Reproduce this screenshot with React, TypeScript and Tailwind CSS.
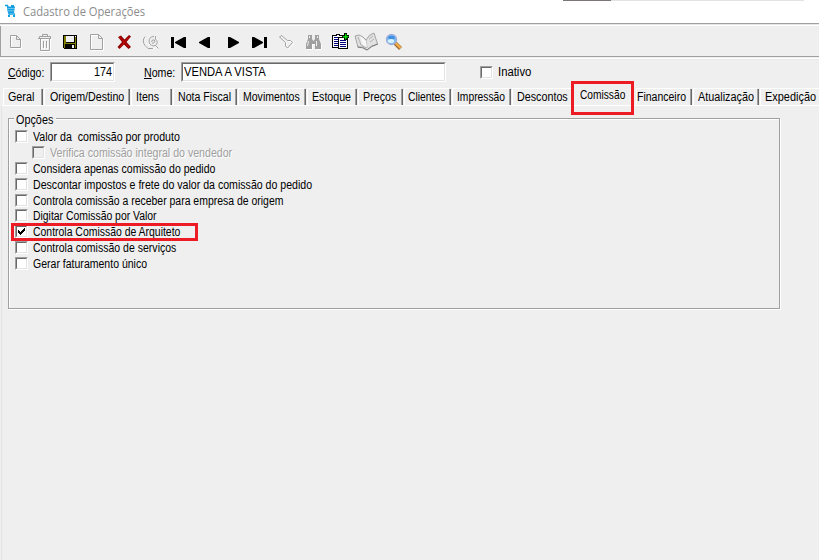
import { useLayoutEffect, useRef, useState } from 'react';
import type { ReactNode } from 'react';

/* Bitmap-like narrow label: scales its glyphs horizontally to the given width. */
function Label({ w, children, className = '' }: { w: number; children: ReactNode; className?: string }) {
  const ref = useRef<HTMLSpanElement>(null);
  const [scale, setScale] = useState(1);
  useLayoutEffect(() => {
    if (ref.current) setScale(w / ref.current.offsetWidth);
  }, [w]);
  return (
    <span className={`block shrink-0 whitespace-pre ${className}`} style={{ width: w }}>
      <span ref={ref} className="inline-block origin-left" style={{ transform: `scaleX(${scale})` }}>
        {children}
      </span>
    </span>
  );
}

function Tool({ x, w, children }: { x: number; w: number; children: ReactNode }) {
  return (
    <svg className="shrink-0" width={w} height={26} viewBox={`${x} 29 ${w} 26`} fill="none">
      {children}
    </svg>
  );
}

function Toolbar() {
  return (
    <div className="flex h-[30px] items-start border-l border-[#a0a0a0] bg-[#efefef] pt-[3px]">
      <Tool x={1} w={29}>
        <path d="M11.500 36.500V48.500H21.500V40.500L17.500 36.500Z" stroke="#fff" />
        <path d="M10.500 35.500H16.500L20.500 39.500V47.500H10.500ZM16.500 35.500V39.500H20.500" stroke="#a0a0a0" />
      </Tool>
      <Tool x={30} w={27}>
        <path d="M39 39.500H52M41.500 40V51.500H50.500V40M44.500 42V49M47.500 42V49" stroke="#fff" />
        <path d="M38 38.500H51M40.500 39V50.500H49.500V39M43.500 41V48M46.500 41V48M39.500 38V36.500H50.500V38M42.500 36V34.500H47.500V36" stroke="#a0a0a0" />
      </Tool>
      <Tool x={57} w={27}>
        <g shapeRendering="crispEdges">
          <path d="M63 35H77V49H64L63 48Z" fill="#000" />
          <path d="M64 36H66V43H75V36H76V48H64Z" fill="#808000" />
          <path d="M66 36H74V42H66Z" fill="#efefef" />
          <path d="M65 44H75V49H65Z" fill="#000" />
          <path d="M72 45H74V48H72Z" fill="#efefef" />
          <path d="M75 36H76V37H75Z" fill="#fff" />
        </g>
      </Tool>
      <Tool x={84} w={26}>
        <path d="M91.500 35.500V50.500H103.500V39.500L98.500 35.500Z" stroke="#fff" />
        <path d="M90.500 34.500H98.500L102.500 38.500V49.500H90.500ZM98.500 34.500V38.500H102.500" stroke="#a0a0a0" />
      </Tool>
      <Tool x={110} w={27}>
        <path d="M118 37L121 35.500L124.500 39.500L129 35L131 36.500L126.500 42L131 47L128.500 49L124 44.500L119.500 49L117.500 47L122 42Z" fill="#900000" />
        <path d="M119.500 37L129 47M129 37L120 47" stroke="#d00b0b" strokeWidth="1" />
      </Tool>
      <Tool x={137} w={28}>
        <path d="M145 36Q141 42 146 47L148 48.500H155M150 39Q154 34 157 39Q159 44 153 46Q148 46 149 41M155 46L159 49" stroke="#fff" />
        <path d="M145 36.500Q141.500 41 145 45.500L148 48.500H153M149 42Q149 36.500 154 36.500M155.500 36V39Q159 42 155.500 45.500Q150.500 47 149 42M151.500 42Q152 39 154.500 40Q155.500 43.500 152 43M155 45L158.500 48.500" stroke="#a0a0a0" />
      </Tool>
      <Tool x={165} w={27}>
        <path d="M171 37H174V48H171ZM186 37V48H184L175 43V42L184 37Z" fill="#000" />
      </Tool>
      <Tool x={192} w={27}>
        <path d="M210 37V48H208L199 43V42L208 37Z" fill="#000" />
      </Tool>
      <Tool x={219} w={27}>
        <path d="M228 37V48H230L239 43V42L230 37Z" fill="#000" />
      </Tool>
      <Tool x={246} w={26}>
        <path d="M252 37V48H254L263 43V42L254 37ZM264 37H267V48H264Z" fill="#000" />
      </Tool>
      <Tool x={272} w={28}>
        <path d="M281 37.500L286.500 43V46.500L288.500 49L293.500 43.500L291 41.500H288L283 36.500" stroke="#fff" />
        <path d="M279.500 37L281.500 35.500L287.500 40.500H290.500L292.500 42.500L287.500 48L285.500 46V42.500Z" stroke="#a0a0a0" />
      </Tool>
      <Tool x={300} w={26}>
        <path d="M309 36H312V39L314 41L316 39V36H319V39L322 45V50H316V45H313V50H307V45L309 40Z" fill="#fff" />
        <path d="M308 35H312V39L313.500 41L315 39V35H319V39L321 44V49H315V44H312V49H306V44L308 39Z" fill="#a0a0a0" />
        <path d="M309.500 36V38M317.500 36V38M308.500 41L307.500 46M316.500 41V46" stroke="#efefef" />
      </Tool>
      <Tool x={326} w={26}>
        <g shapeRendering="crispEdges">
          <path d="M332.500 35.500H336.500V34.500H339.500V35.500H343.500V47.500H332.500Z" fill="#fff" stroke="#000" />
          <path d="M334 37.500H342M334 39.500H342M334 41.500H342M334 43.500H342M334 45.500H340" stroke="#000080" />
          <path d="M338.500 37.500H347.500V48.500H338.500Z" fill="#fff" stroke="#000" />
          <path d="M340 40.500H346M340 42.500H346M340 44.500H346M340 46.500H346" stroke="#000080" />
          <path d="M344 33H347V35H349V38H347V40H344V38H342V35H344Z" fill="#000" />
          <path d="M345 34H346V36H348V37H346V39H345V37H343V36H345Z" fill="#00e000" stroke="#00d000" strokeWidth=".5" />
        </g>
      </Tool>
      <Tool x={352} w={28}>
        <path d="M355 36L359 35Q363 36 366 40Q369 34 374 33L377.500 44Q371 45 367 50Q363 46 358 47Z" fill="#e2e2e2" stroke="#a3a3a3" />
        <path d="M358 37L361 45L366 48M366 40L367 48M369 39L373 36M370 42L374 39" stroke="#b0b0b0" />
        <path d="M360 36L366 41L367 47L362 44Z" fill="#f7f7f7" />
        <path d="M357.500 47Q363 47 367 50Q371 46 378 44" stroke="#7d7d7d" />
      </Tool>
      <Tool x={380} w={28}>
        <path d="M395 43L400.500 48.500" stroke="#9a6a35" strokeWidth="4" />
        <path d="M395.500 43L400.500 48" stroke="#f6ae45" strokeWidth="2.300" />
        <circle cx="391.500" cy="39.500" r="5" fill="#74b6f5" stroke="#9fafdb" strokeWidth="1.400" />
        <ellipse cx="391.500" cy="37.500" rx="3.300" ry="1.800" fill="#3f90e2" />
        <ellipse cx="391" cy="41" rx="3.300" ry="2" fill="#d4f2ff" />
      </Tool>
    </div>
  );
}

function Check({ checked = false, disabled = false }: { checked?: boolean; disabled?: boolean }) {
  return (
    <span
      className={`block size-[13px] shrink-0 border border-t-[#a0a0a0] border-l-[#a0a0a0] border-r-white border-b-white ${disabled ? 'bg-[#efefef]' : 'bg-white'}`}
    >
      <span className="block size-[11px] border border-t-[#696969] border-l-[#696969] border-r-[#e3e3e3] border-b-[#e3e3e3]">
        {checked && (
          <svg className="block" width="9" height="9" viewBox="0 0 9 9" shapeRendering="crispEdges">
            <path d="M1 3h1v1h1v1h1v-1h1v-1h1v-1h1v-1h1v3h-1v1h-1v1h-1v1h-1v1h-1v-1h-1v-1h-1z" fill="#000" />
          </svg>
        )}
      </span>
    </span>
  );
}

function Input({ className, children }: { className: string; children: ReactNode }) {
  return (
    <div className={`h-[20px] shrink-0 border border-t-[#a0a0a0] border-l-[#a0a0a0] border-r-white border-b-white ${className}`}>
      <div className="flex h-full border border-t-[#696969] border-l-[#696969] border-r-[#e3e3e3] border-b-[#e3e3e3] bg-white leading-[16px]">
        {children}
      </div>
    </div>
  );
}

type Tab = { text: string; w: number; pad: string; box: string; active?: boolean };

const tabs: Tab[] = [
  { text: 'Geral', w: 26, pad: 'pl-[4px]', box: 'w-[41px]' },
  { text: 'Origem/Destino', w: 74, pad: 'pl-[5px]', box: 'w-[87px]' },
  { text: 'Itens', w: 23, pad: 'pl-[4px]', box: 'w-[42px]' },
  { text: 'Nota Fiscal', w: 53, pad: 'pl-[4px]', box: 'w-[65px]' },
  { text: 'Movimentos', w: 57, pad: 'pl-[4px]', box: 'w-[69px]' },
  { text: 'Estoque', w: 39, pad: 'pl-[4px]', box: 'w-[51px]' },
  { text: 'Preços', w: 33, pad: 'pl-[4px]', box: 'w-[46px]' },
  { text: 'Clientes', w: 37, pad: 'pl-[3px]', box: 'w-[48px]' },
  { text: 'Impressão', w: 48, pad: 'pl-[4px]', box: 'w-[60px]' },
  { text: 'Descontos', w: 51, pad: 'pl-[4px]', box: 'w-[62px]' },
  { text: 'Comissão', w: 45, pad: 'pl-[6px]', box: 'w-[62px]', active: true },
  { text: 'Financeiro', w: 49, pad: 'pl-0', box: 'w-[57px]' },
  { text: 'Atualização', w: 56, pad: 'pl-[4px]', box: 'w-[67px]' },
  { text: 'Expedição', w: 51, pad: 'pl-[4px]', box: 'w-[60px]' },
];

type Option = { text: string; w: number; checked?: boolean; disabled?: boolean; h?: string };

const options: Option[] = [
  { text: 'Valor da  comissão por produto', w: 147 },
  { text: 'Verifica comissão integral do vendedor', w: 182, disabled: true },
  { text: 'Considera apenas comissão do pedido', w: 182 },
  { text: 'Descontar impostos e frete do valor da comissão do pedido', w: 279 },
  { text: 'Controla comissão a receber para empresa de origem', w: 250, h: 'h-[15px]' },
  { text: 'Digitar Comissão por Valor', w: 124 },
  { text: 'Controla Comissão de Arquiteto', w: 147, checked: true },
  { text: 'Controla comissão de serviços', w: 143 },
  { text: 'Gerar faturamento único', w: 114 },
];

export default function App() {
  return (
    <div className="relative flex h-[560px] w-[819px] flex-col overflow-hidden bg-[#efefef] font-['Liberation_Sans',Arial,sans-serif] text-[12px] leading-[16px] text-black">
      <header className="flex h-[23px] shrink-0 items-start bg-white">
        <svg className="mt-[4px] ml-[4px] shrink-0" width="13" height="14" viewBox="0 0 13 14">
          <path d="M1 1.500H3.500L5 10H11" fill="none" stroke="#159fe0" strokeWidth="1.400" />
          <path d="M3 2.500H11L10 9H4Z" fill="#159fe0" />
          <path d="M3.500 4.500H11M4 6.800H10.500" stroke="#a5def8" strokeWidth=".6" />
          <path d="M7 1H10V3H7ZM4 11H6V13H4ZM9 11H11V13H9Z" fill="#159fe0" />
        </svg>
        <div className="mt-[4px] ml-[6px] font-['Open_Sans','Noto_Sans',sans-serif] text-[12px] text-[#8c8c8c]">
          <Label w={122}>Cadastro de Operações</Label>
        </div>
        <div className="ml-[418px] h-px w-[48px] bg-[#7b7575]" />
        <div className="h-px w-[193px] bg-[#e3e3e3]" />
      </header>
      <div className="h-px shrink-0 bg-[#a0a0a0]" />
      <div className="h-px shrink-0 bg-[#e6e6e6]" />
      <div className="h-px shrink-0 bg-white" />
      <Toolbar />
      <div className="h-px shrink-0 bg-[#a0a0a0]" />
      <div className="h-px shrink-0 bg-[#efefef]" />
      <div className="h-px shrink-0 bg-white" />
      <div className="h-px shrink-0 bg-[#e8e8e8]" />

      <div className="flex h-[28px] shrink-0 items-start pt-[2px] pl-[8px]">
        <div className="mt-[3px] w-[42px]">
          <Label w={36}><u>C</u>ódigo:</Label>
        </div>
        <Input className="w-[65px] pl-0">
          <Label w={18} className="ml-[42px]">174</Label>
        </Input>
        <div className="mt-[3px] ml-[29px] w-[36px]">
          <Label w={31}><u>N</u>ome:</Label>
        </div>
        <Input className="ml-px w-[265px]">
          <Label w={82} className="ml-px">VENDA A VISTA</Label>
        </Input>
        <div className="mt-[4px] ml-[34px]">
          <Check />
        </div>
        <div className="mt-[2px] ml-[5px]">
          <Label w={33}>Inativo</Label>
        </div>
      </div>

      <nav className="flex h-[17px] shrink-0 items-start pl-[3px]">
        {tabs.map((t) =>
          t.active ? (
            <div key={t.text} className={`-mt-px h-[18px] shrink-0 ${t.box} ${t.pad}`}>
              <Label w={t.w}>{t.text}</Label>
            </div>
          ) : (
            <div key={t.text} className={`flex h-[17px] shrink-0 ${t.box}`}>
              <div className={`min-w-0 flex-1 border-t border-l border-white ${t.pad}`}>
                <Label w={t.w}>{t.text}</Label>
              </div>
              {t.text !== 'Descontos' && t.text !== 'Expedição' && (
                <div className="mt-px mr-px w-[2px] border-r border-[#696969] bg-[#a0a0a0]" />
              )}
            </div>
          ),
        )}
      </nav>

      <main className="ml-px flex-1 border-t border-l border-t-white border-l-[#e3e3e3] pt-[7px] pl-[6px]">
        <fieldset className="mt-[5px] h-[191px] w-[772px] border border-[#a0a0a0] shadow-[1px_1px_0_#fff,inset_1px_1px_0_#fff]">
          <div className="-mt-[7px] ml-[5px] w-[42px] bg-[#efefef] pl-[2px]">
            <Label w={37}>Opções</Label>
          </div>
          <div className="pl-[6px]">
            {options.map((o) => (
              <div key={o.text} className={`flex shrink-0 items-start gap-[5px] ${o.h ?? 'h-[16px]'} ${o.disabled ? 'pl-[17px]' : ''}`}>
                <div className="pt-[2px]">
                  <Check checked={o.checked} disabled={o.disabled} />
                </div>
                <Label w={o.w} className={`pt-px ${o.disabled ? 'text-[#a0a0a0] [text-shadow:1px_1px_0_#fff]' : ''}`}>
                  {o.text}
                </Label>
              </div>
            ))}
          </div>
        </fieldset>
      </main>

      <div className="absolute top-[81px] left-[571px] h-[34px] w-[63px] border-[3px] border-[#ed1c24]" />
      <div className="absolute top-[223px] left-[11px] h-[18px] w-[187px] border-[3px] border-[#ed1c24]" />
    </div>
  );
}
